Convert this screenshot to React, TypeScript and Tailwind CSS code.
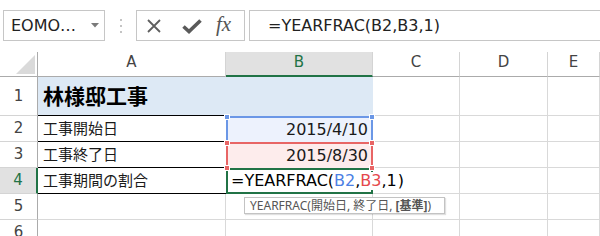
import React from "react";

const LAT = { fontFamily: '"DejaVu Sans", "Noto Sans CJK JP", sans-serif' };
const JP = { fontFamily: '"Noto Sans CJK JP", sans-serif' };

function ColHead({ label, sel }: { label: string; sel?: boolean }) {
  return (
    <div
      className={
        sel
          ? "flex items-center justify-center pb-[3px] bg-[#e1e1e1] border-r border-r-[#d4d4d4] border-b-2 border-b-[#217346] text-[#217346] text-[15px]"
          : "flex items-center justify-center pb-[3px] border-r border-r-[#d4d4d4] border-b border-b-[#ababab] text-[#444] text-[15px]"
      }
    >
      {label}
    </div>
  );
}

function RowHead({ n, sel }: { n: number; sel?: boolean }) {
  return (
    <div
      className={
        sel
          ? "flex items-center justify-center bg-[#e1e1e1] border-b border-b-[#d4d4d4] border-r-2 border-r-[#217346] text-[#217346] text-[15px]"
          : "flex items-center justify-center border-b border-b-[#d4d4d4] border-r border-r-[#ababab] text-[#444] text-[15px]"
      }
    >
      {n}
    </div>
  );
}

function Empty() {
  return <div className="border-r border-b border-[#d9d9d9]" />;
}

export default function App() {
  return (
    <div className="relative w-[600px] h-[236px] overflow-hidden bg-white text-[#1a1a1a]" style={LAT}>
      {/* Formula bar */}
      <div className="h-[52px] flex items-start pt-[10px]">
        <div className="ml-[3px] w-[102px] h-[31px] border border-[#c6c6c6] flex items-center justify-between pl-[7px] pr-[5px]">
          <span className="text-[16px] text-[#222] leading-none">EOMO…</span>
          <svg width="8" height="5" viewBox="0 0 8 5">
            <polygon points="0,0 8,0 4,4.5" fill="#7a7a7a" />
          </svg>
        </div>
        <div className="ml-[15px] w-[2px] h-[31px] flex flex-col items-center justify-center gap-[4px]">
          <div className="w-[2px] h-[2px] bg-[#c4c4c4]" />
          <div className="w-[2px] h-[2px] bg-[#c4c4c4]" />
          <div className="w-[2px] h-[2px] bg-[#c4c4c4]" />
        </div>
        <div className="ml-[14px] w-[109px] h-[31px] border border-[#c6c6c6] flex items-center pl-[10px]">
          <svg width="14" height="14" viewBox="0 0 14 14" className="mt-[1px]">
            <path d="M1 1 L13 13 M13 1 L1 13" stroke="#5f5f5f" strokeWidth="1.8" fill="none" />
          </svg>
          <svg width="20" height="15" viewBox="0 0 20 15" className="ml-[21px] mt-[2px]">
            <path d="M1.5 7.5 L7 12.5 L18.5 1.5" stroke="#5a5a5a" strokeWidth="3.6" fill="none" strokeLinejoin="miter" />
          </svg>
          <span
            className="ml-[14px] text-[21px] italic text-[#555] leading-none -mt-[2px]"
            style={{ fontFamily: '"Liberation Serif", "DejaVu Serif", serif' }}
          >
            fx
          </span>
        </div>
        <div className="ml-[4px] flex-1 h-[31px] border-l border-y border-[#c6c6c6] flex items-center pl-[18px] text-[16px] text-[#222] whitespace-nowrap">
          =YEARFRAC(B2,B3,1)
        </div>
      </div>

      {/* Grid */}
      <div className="grid grid-cols-[38px_188px_147px_87px_88px_1fr] grid-rows-[25px_39px_26px_26px_26px_26px_26px]">
        {/* header row */}
        <div className="relative border-r border-r-[#ababab] border-b border-b-[#ababab]">
          <svg width="19" height="19" viewBox="0 0 19 19" className="absolute left-[16px] top-[3px]">
            <polygon points="19,0 19,19 0,19" fill="#dadada" />
          </svg>
        </div>
        <ColHead label="A" />
        <ColHead label="B" sel />
        <ColHead label="C" />
        <ColHead label="D" />
        <ColHead label="E" />

        {/* row 1 */}
        <RowHead n={1} />
        <div className="bg-[#dde9f5] border-b border-b-black flex items-center pl-[5px]">
          <span className="text-[21px] font-bold text-black" style={JP}>林様邸工事</span>
        </div>
        <div className="bg-[#dde9f5]" />
        <Empty />
        <Empty />
        <Empty />

        {/* row 2 */}
        <RowHead n={2} />
        <div className="border-b border-b-black flex items-center pl-[5px]">
          <span className="text-[15px]" style={JP}>工事開始日</span>
        </div>
        <div className="relative bg-[#edf2fd] border-x-2 border-t-2 border-[#6b97e6] flex items-center justify-end pr-[3px] text-[16px]">
          2015/4/10
          <div className="absolute z-10 left-[-4px] top-[-4px] w-[6px] h-[6px] bg-[#6b97e6] border border-white" />
          <div className="absolute z-10 right-[-4px] top-[-4px] w-[6px] h-[6px] bg-[#6b97e6] border border-white" />
        </div>
        <Empty />
        <Empty />
        <Empty />

        {/* row 3 */}
        <RowHead n={3} />
        <div className="border-b border-b-black flex items-center pl-[5px]">
          <span className="text-[15px]" style={JP}>工事終了日</span>
        </div>
        <div className="relative bg-[#fdecec] border-x-2 border-t-2 border-[#e86565] flex items-center justify-end pr-[3px] text-[16px]">
          2015/8/30
          <div className="absolute z-10 left-[-4px] top-[-4px] w-[6px] h-[6px] bg-[#e86565] border border-white" />
          <div className="absolute z-10 right-[-4px] top-[-4px] w-[6px] h-[6px] bg-[#e86565] border border-white" />
          <div className="absolute z-10 left-[-4px] bottom-[-3px] w-[6px] h-[6px] bg-[#e86565] border border-white" />
          <div className="absolute z-10 right-[-4px] bottom-[-3px] w-[6px] h-[6px] bg-[#e86565] border border-white" />
        </div>
        <Empty />
        <Empty />
        <Empty />

        {/* row 4 */}
        <RowHead n={4} sel />
        <div className="border-b border-b-black flex items-center pl-[5px]">
          <span className="text-[15px]" style={JP}>工事期間の割合</span>
        </div>
        <div className="relative z-[5] border-2 border-[#217346] flex items-center pl-[3px] text-[16px] leading-[18px] whitespace-nowrap overflow-visible">
          <span className="text-black">=YEARFRAC(</span>
          <span className="text-[#4d80e4]">B2</span>
          <span className="text-black">,</span>
          <span className="text-[#e5484d] bg-white">B3</span>
          <span className="text-black bg-white">,1</span>
          <span className="inline-block w-px h-[15px] bg-[#555] mx-[0.5px]" />
          <span className="text-black">)</span>
        </div>
        <div className="border-b border-[#d9d9d9] border-r" />
        <Empty />
        <Empty />

        {/* row 5 */}
        <RowHead n={5} />
        <Empty />
        <Empty />
        <Empty />
        <Empty />
        <Empty />

        {/* row 6 */}
        <RowHead n={6} />
        <Empty />
        <Empty />
        <Empty />
        <Empty />
        <Empty />
      </div>

      {/* Function tooltip */}
      <div
        className="absolute left-[244px] top-[197px] w-[201px] h-[17px] bg-white border border-[#c3c3c3] shadow-[1px_1px_1px_rgba(0,0,0,0.12)] flex items-center pl-[5px] text-[12px] text-[#555] whitespace-pre leading-none"
        style={{ fontFamily: '"Noto Sans", "Noto Sans CJK JP", sans-serif' }}
      >
        {"YEARFRAC(開始日, 終了日, "}
        <span className="font-bold">[基準]</span>)
      </div>
    </div>
  );
}
